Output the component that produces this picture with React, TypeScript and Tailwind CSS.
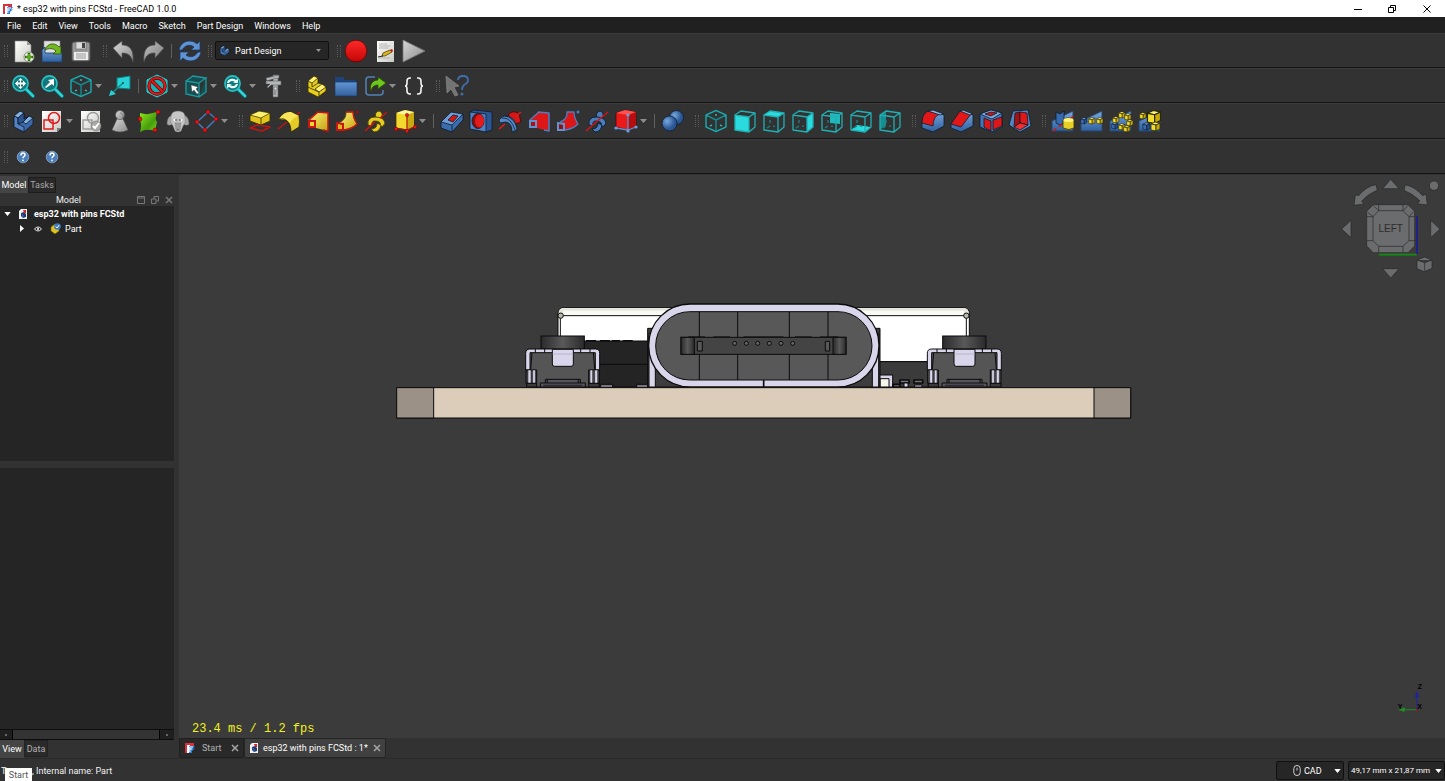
import React from 'react';

const CYAN = '#2fd3d6';
const TEAL = '#16898c';
const DARK = '#0c1a2b';
const OLIVE = '#332c00';

// Corners of the wire cube used by the standard views
const FACES: Record<string, string> = {
  front: '2,6 16,8 16,23 2,21',
  top: '2,6 16,8 22,4 8,2',
  right: '16,8 22,4 22,18 16,23',
  rear: '8,2 22,4 22,18 8,16',
  bottom: '2,21 16,23 22,18 8,16',
  left: '2,6 8,2 8,16 2,21',
};

const IsoWire = () => (
  <g fill="none" stroke={TEAL} strokeWidth="1.4" strokeLinejoin="round">
    <path d="M12 1.5 22 6v12l-10 4.5L2 18V6zM2 6l10 5 10-5M12 11v11.5" />
    <path d="M12 1.5 22 6v12l-10 4.5L2 18V6z" stroke={CYAN} strokeWidth="0.5" />
    <path d="M12 5v2M6 17l2-1M18 17l-2-1" stroke={CYAN} strokeWidth="1.2" />
  </g>
);

const ViewCube = ({ face }: { face: string }) => (
  <g strokeLinejoin="round">
    {face === 'rear' && <polygon points="10,4 20,5 20,15 10,14" fill="#1fb9bd" />}
    {face !== 'rear' && <polygon points={FACES[face]} fill={face === 'left' ? '#168f92' : '#2bdadd'} />}
    <path d="M2 6l14 2v15L2 21zM2 6l6-4 14 2-6 4M22 4v14l-6 5" fill="none" stroke="#20b0b4" strokeWidth="1.3" />
    {face !== 'front' && <path d="M8 11v3M8 17l-3 2M11 17l2 .3" fill="none" stroke={TEAL} strokeWidth="1.2" />}
  </g>
);

const Lens = () => (
  <g>
    <path d="M15 15l7 7" stroke="#0a5b5e" strokeWidth="4.4" strokeLinecap="round" />
    <path d="M15 15l7 7" stroke={CYAN} strokeWidth="2.6" strokeLinecap="round" />
    <circle cx="9.5" cy="9.5" r="7.6" fill="#12777a" stroke="#27c3c6" strokeWidth="1.6" />
  </g>
);

const Block = ({ x = 0, y = 0, s = 1, c = 'y' }: { x?: number; y?: number; s?: number; c?: string }) => (
  <g transform={`translate(${x} ${y}) scale(${s})`} stroke={c === 'y' ? '#2b2600' : DARK} strokeLinejoin="round" strokeWidth=".8">
    <path d="M1 3l4-2 5 1-4 2z" fill={c === 'y' ? '#fff27a' : '#7fa9dd'} />
    <path d="M1 3l5 1v6L1 9z" fill={c === 'y' ? '#f2dc2c' : '#3d6db0'} />
    <path d="M6 4l4-2v6l-4 2z" fill={c === 'y' ? '#c4a80c' : '#28508c'} />
  </g>
);

const Stair = () => (
  <path d="M1 12 22 2v20H1z" fill="url(#blue)" stroke="#24466f" />
);

const BodyShape = () => (
  <g stroke={DARK} strokeWidth=".8" strokeLinejoin="round">
    <path d="M3 7l6-5 4 2v6l5-3 4 2v6l-9 8-10-5z" fill="#3a6aa9" />
    <path d="M3 7l6-5 4 2-6 5zM12 13l6-6 4 2-7 6z" fill="#85aedd" />
    <path d="M3 7l4 2v6l6 3v5l-10-5z" fill="#5282c0" />
    <path d="M7 9l6-5v6l5-3-6 6-5 2z" fill="#2c5590" />
  </g>
);

const Spiral = ({ fill, edge }: { fill: string; edge: string }) => (
  <g fill={fill} stroke={edge} strokeWidth=".9" strokeLinejoin="round">
    <path d="M12 9q-2-6 3-7 4 1 3 6l-2 3z" />
    <path d="M4 16q-1-8 7-8 9 0 10 6-1 4-5 4 2-6-5-6-4 0-3 5z" />
    <path d="M7 20q6 0 6-6l4 2q-1 7-7 7z" />
  </g>
);

const icons: Record<string, React.ReactNode> = {
  newDoc: (
    <g>
      <path d="M4 2h12l4 4v17H4z" fill="url(#paper)" stroke="#8a8a8a" strokeWidth=".6" />
      <path d="M16 2l4 4h-4z" fill="#999" />
      <circle cx="18" cy="18" r="5" fill="#f3f6ee" stroke="#7d8b70" />
      <path d="M18 14v8M14 18h8" stroke="#2f6b0a" strokeWidth="2.6" />
      <path d="M18 15v6M15 18h6" stroke="#6fc01e" strokeWidth="1.2" />
    </g>
  ),
  open: (
    <g>
      <path d="M4 2h16v13H4z" fill="#dedede" stroke="#888" strokeWidth=".6" />
      <path d="M2 11l3-3v6h16l1-1v10H2z" fill="url(#blue)" stroke="#1d3a68" strokeWidth=".8" />
      <path d="M5 11c2-7 10-8 14-3l2-1v8h-8l3-3c-3-3-7-3-11-1z" fill="#71b81d" stroke="#28490a" strokeWidth=".8" />
    </g>
  ),
  save: (
    <g>
      <rect x="3" y="3" width="18" height="19" rx="2" fill="#989898" stroke="#4c4c4c" />
      <rect x="7" y="3" width="10" height="7" fill="#ddd" stroke="#666" strokeWidth=".6" />
      <rect x="13" y="4" width="3" height="5" fill="#444" />
      <rect x="5" y="13" width="14" height="8" fill="#eee" />
      <path d="M7 15h10M7 17h10M7 19h10" stroke="#999" />
    </g>
  ),
  undo: <path d="M1 9l9-7v4c8 0 12 5 11 17-2-7-5-9-11-9v5z" fill="url(#silver)" stroke="#555" strokeWidth=".7" />,
  redo: <path d="M23 9l-9-7v4C6 6 2 11 3 23c2-7 5-9 11-9v5z" fill="url(#silver)" stroke="#555" strokeWidth=".7" opacity=".85" />,
  refresh: (
    <g fill="#5f93d2" stroke="#1d3a68" strokeWidth=".8">
      <path d="M1 11C3 1 14 0 19 5l3-3v9h-9l3-3c-4-3-9-2-12 3z" />
      <path d="M23 13c-2 10-13 11-18 6l-3 3v-9h9l-3 3c4 3 9 2 12-3z" />
    </g>
  ),
  record: <circle cx="12" cy="12" r="10.8" fill="url(#redBall)" stroke="#5c0000" strokeWidth=".7" />,
  editMacro: (
    <g>
      <rect x="4" y="2" width="17" height="21" fill="url(#paper)" />
      <path d="M6 5h8M6 7h11M6 9h9M6 19h11" stroke="#a5a5a5" strokeWidth=".8" />
      <path d="M9 17l1-3 7-3 2 2-7 4z" fill="#e3b51c" stroke="#3a2c00" strokeWidth=".7" />
      <path d="M17 11l2-1 1 2-1 1z" fill="#c11" />
      <path d="M5 18l5-1" stroke="#222" />
    </g>
  ),
  play: <path d="M1 1v22l22-11z" fill="url(#silver)" stroke="#777" strokeWidth=".8" />,
  fitAll: (
    <g>
      <Lens />
      <path d="M9.5 4l2.500 2.500h-2v2h2v-2L15 9.500l-3 3v-2h-2v2h2L9.500 15 7 12.500h2v-2H7v2L4 9.500l3-3v2h2v-2H7z" fill="#fff" />
    </g>
  ),
  fitSel: (
    <g>
      <Lens />
      <path d="M14 5v7l-2-2-6 4-1-1 5-5-2-2z" fill="#fff" />
    </g>
  ),
  iso: <IsoWire />,
  align: (
    <g>
      <path d="M9 4l13-2v13L9 14z" fill="#28d2d5" stroke="#0c7d80" />
      <path d="M15 9L4 19" stroke={TEAL} strokeWidth="1.4" />
      <circle cx="15" cy="9" r="1" fill="#0a5052" />
      <path d="M1 22l2-6 5 4z" fill="#28d2d5" />
    </g>
  ),
  drawStyle: (
    <g>
      <path d="M12 1l10 5v12l-10 5-10-5V6z" fill="#16b4b8" stroke={CYAN} />
      <circle cx="12" cy="12" r="8" fill="none" stroke="#570000" strokeWidth="3.4" />
      <circle cx="12" cy="12" r="8" fill="none" stroke="#e01919" strokeWidth="2.2" />
      <path d="M6.5 6.5l11 11" stroke="#570000" strokeWidth="3.6" />
      <path d="M6.5 6.5l11 11" stroke="#e01919" strokeWidth="2.4" />
    </g>
  ),
  boxSel: (
    <g>
      <path d="M2 7l13 2v14L2 20zM2 7l7-5 13 2-7 5M22 4v14l-7 5" fill="#174d50" stroke="#1e9a9e" strokeWidth="1.3" />
      <path d="M7 11l7 2-2 2 3 4-2 1-3-4-2 2z" fill="#fff" stroke="#333" strokeWidth=".4" />
    </g>
  ),
  zoomSync: (
    <g>
      <Lens />
      <path d="M4 9c1-5 6-5 9-3l2-1v4h-5l2-1c-3-2-5-1-6 1zM15 10c-1 5-6 5-9 3l-2 1v-4h5l-2 1c3 2 5 1 6-1z" fill="#e9ffff" />
    </g>
  ),
  caliper: (
    <g fill="#b5b8ba" stroke="#585b5d" strokeWidth=".6">
      <path d="M11 1h5v22h-5z" />
      <path d="M4 4l13-3v3l-6 1-6 2zM4 7h15v4H9l-3 3-1-1 3-3H4z" />
      <path d="M12 13h3v3h-3z" fill="#ddd" />
      <path d="M12 18h2M12 20h2" stroke="#333" />
    </g>
  ),
  part: (
    <g stroke={OLIVE} strokeWidth=".8" strokeLinejoin="round">
      <path d="M3 7l6-5 4 2v5l4 1 4 3v4l-8 6-10-5z" fill="#e8ce1f" />
      <path d="M3 7l6-5 4 2-6 5zM10 15l7-5 4 3-7 5z" fill="#fff07a" />
      <path d="M7 9v4l6-4M3 13l4 2 7 3v4" fill="none" />
    </g>
  ),
  folder: (
    <g>
      <path d="M1 3h9v3h12v6H1z" fill="#1d427c" />
      <path d="M1 8h22v14H1z" fill="url(#folder)" stroke="#183969" strokeWidth=".7" />
    </g>
  ),
  link: (
    <g>
      <path d="M12 3H6Q3 3 3 6v12q0 3 3 3h11q3 0 3-3v-2" fill="none" stroke="#5282b8" strokeWidth="1.5" />
      <path d="M8 17c-2-7 2-11 7-11V3l8 6-8 6v-4c-4 0-6 2-7 6z" fill="#6ec71c" stroke="#254c08" strokeWidth=".8" />
    </g>
  ),
  vars: (
    <path d="M9 4H8q-3 0-3 3v2q0 3-2 3 2 0 2 3v2q0 3 3 3h1M15 4h1q3 0 3 3v2q0 3 2 3-2 0-2 3v2q0 3-3 3h-1" fill="none" stroke="#f4f4f4" strokeWidth="1.6" />
  ),
  whatsThis: (
    <g>
      <path d="M1 2l13 10-5 1 4 8-3 1-4-7-4 4z" fill="#737373" stroke="#999" strokeWidth=".5" />
      <path d="M13 6q0-4 5-4t5 4q0 3-4 5-2 2-2 5" fill="none" stroke="#3f6fab" strokeWidth="1.8" />
      <circle cx="17" cy="20" r="1.5" fill="#3f6fab" />
    </g>
  ),
  body: <BodyShape />,
  sketch: (
    <g>
      <path d="M2 2h19v17l-4 4H2z" fill="url(#paper)" />
      <path d="M21 19h-4v4z" fill="#777" />
      <rect x="4" y="11" width="9" height="9" fill="none" stroke="#df1b1b" strokeWidth="1.5" />
      <circle cx="14" cy="9" r="5.5" fill="none" stroke="#df1b1b" strokeWidth="1.5" />
    </g>
  ),
  validate: (
    <g>
      <rect x="2" y="2" width="19" height="21" fill="url(#paper)" />
      <rect x="4" y="11" width="9" height="9" fill="none" stroke="#999" strokeWidth="1.4" />
      <circle cx="14" cy="9" r="5.5" fill="none" stroke="#999" strokeWidth="1.4" />
      <circle cx="17" cy="17" r="5" fill="#a8a8a8" stroke="#777" strokeWidth=".6" />
      <path d="M14 17l2 2 4-5" fill="none" stroke="#fff" strokeWidth="2" />
    </g>
  ),
  pawn: (
    <g fill="url(#silver)" stroke="#555" strokeWidth=".6">
      <path d="M4 21l5-11h6l5 11q-8 4-16 0z" />
      <circle cx="12" cy="6" r="4.5" />
      <path d="M12 4q4 0 3 5" fill="none" />
    </g>
  ),
  binder: (
    <g>
      <path d="M3 4q9 3 18-2-4 8-1 11l-2 9q-8-3-15 1 2-7 0-12z" fill="url(#green)" />
      <g fill="#f01212" stroke="#6d0000" strokeWidth=".5">
        <circle cx="21" cy="3" r="2" />
        <circle cx="3" cy="10" r="2" />
        <circle cx="18" cy="21" r="2" />
      </g>
    </g>
  ),
  sheep: (
    <g stroke="#777" strokeWidth=".4">
      <path d="M1 15q0-8 6-9v8q-3 4-6 1zM23 15q0-8-6-9v8q3 4 6 1z" fill="#a6a6a6" />
      <path d="M5 8q0-6 7-6t7 6q1 6-2 9l-2 5q-3 2-6 0l-2-5q-3-3-2-9z" fill="#c6c6c6" />
      <path d="M9 14h6l-1 7q-2 2-4 0z" fill="#9b9b9b" />
      <circle cx="9" cy="11" r="2" fill="#fff" />
      <circle cx="15" cy="11" r="2" fill="#fff" />
      <circle cx="10" cy="11" r=".8" fill="#333" />
      <circle cx="14" cy="11" r=".8" fill="#333" />
      <path d="M11 20l1 1 1-1" stroke="#333" fill="none" />
    </g>
  ),
  datum: (
    <g>
      <path d="M13 3L21 10 10 21 2 13z" fill="none" stroke="#4479bd" strokeWidth="1.5" />
      <g fill="#f01212" stroke="#6d0000" strokeWidth=".5">
        <circle cx="13" cy="3" r="2" />
        <circle cx="21" cy="10" r="2" />
        <circle cx="10" cy="21" r="2" />
        <circle cx="2" cy="13" r="2" />
      </g>
    </g>
  ),
  pad: (
    <g strokeLinejoin="round">
      <path d="M2 19l7-3 13 2-8 4z" fill="none" stroke="#c51414" strokeWidth="1.5" />
      <path d="M2 6v6l11 4 9-4V4z" fill="#e2c61b" stroke={OLIVE} strokeWidth=".8" />
      <path d="M2 6l9-4 11 2-9 5z" fill="#fff26e" stroke={OLIVE} strokeWidth=".7" />
      <path d="M13 9v7" stroke={OLIVE} strokeWidth=".8" />
    </g>
  ),
  revolve: (
    <g strokeLinejoin="round">
      <path d="M1 20L23 3" stroke="#c51414" strokeWidth="1.5" />
      <path d="M2 10Q7 2 14 3l8 4q1 6 0 11l-8 5q0-8-4-11-3-2-5-1z" fill="#e4cb28" stroke={OLIVE} strokeWidth=".8" />
      <path d="M2 10Q7 2 14 3l8 4q-6 1-9 7-4-6-11-4z" fill="#f8e65a" />
      <path d="M2 10q10-3 12 13" fill="none" stroke={OLIVE} strokeWidth=".7" />
    </g>
  ),
  loft: (
    <g strokeLinejoin="round">
      <path d="M2 11L12 3l10 1v18l-12-3z" fill="url(#yellow)" />
      <path d="M11 3l11 1v18l-5-1M3 11l9-8" fill="none" stroke="#c91414" strokeWidth="1.5" />
      <path d="M2 11h8v8H2z" fill="#c91414" />
      <path d="M4 13h4v4H4z" fill="#f0d82e" />
    </g>
  ),
  pipe: (
    <g strokeLinejoin="round">
      <path d="M4 14q8-4 7-11h7q0 6 4 12-5 5-13 6z" fill="url(#yellow)" stroke="#5b4a00" strokeWidth=".7" />
      <path d="M11 3h7q0 6 4 12-5 5-13 6" fill="none" stroke="#c91414" strokeWidth="1.3" />
      <path d="M1 13l8 1v8H1z" fill="#c91414" />
      <path d="M3 15l4 1v4H3z" fill="#d8b31c" />
      <circle cx="22" cy="3" r="1.6" fill="#9c0d0d" />
    </g>
  ),
  helix: (
    <g>
      <Spiral fill="#e6cb22" edge="#4a3f00" />
      <path d="M1 22l10-9M16 9l7-6" stroke="#c91414" strokeWidth="1.5" />
    </g>
  ),
  addPrim: (
    <g>
      <path d="M3 4l9-3 9 2v15l-7 3-11-2z" fill="#f0d92c" stroke={OLIVE} strokeWidth=".7" />
      <path d="M14 6l7-3v15l-7 3z" fill="#c6ab12" />
      <path d="M3 4l9-3 9 2-7 3z" fill="#fff79a" />
      <path d="M14 6v15M3 19l11 2 7-3" stroke="#b51212" strokeWidth="1.2" fill="none" />
      <g fill="#e81616" stroke="#6d0000" strokeWidth=".4">
        <circle cx="14" cy="6" r="1.7" /><circle cx="3" cy="20" r="1.7" /><circle cx="14" cy="22" r="1.7" /><circle cx="22" cy="18" r="1.7" />
      </g>
    </g>
  ),
  pocket: (
    <g stroke={DARK} strokeWidth=".8" strokeLinejoin="round">
      <path d="M1 13v6l11 4L23 11V5z" fill="#3a6cae" />
      <path d="M1 13L11 3l12 2-11 11z" fill="#6d9bd6" />
      <path d="M8 11l5-5 5 1-5 6z" fill="#d61414" />
      <path d="M12 16v7" />
    </g>
  ),
  hole: (
    <g stroke={DARK} strokeWidth=".8" strokeLinejoin="round">
      <path d="M1 3l4-2 18 2v18l-6 2z" fill="#2c5794" />
      <path d="M1 3l16 2v18L1 20z" fill="#5083c4" />
      <ellipse cx="9" cy="12" rx="6" ry="7.5" fill="#8b0c0c" />
      <ellipse cx="10.5" cy="12" rx="4.5" ry="6.5" fill="#e31b1b" stroke="none" />
    </g>
  ),
  groove: (
    <g strokeLinejoin="round">
      <path d="M10 6q5-6 11-1l2 8-5 2z" fill="#d31818" stroke="#4d0000" strokeWidth=".8" />
      <path d="M1 11q6-8 14-1 4 4 4 11l-5 2q0-9-6-10l-6 1z" fill="#5487c6" stroke={DARK} strokeWidth=".8" />
      <path d="M4 9q9-1 13 12M7 7q8 1 12 11" fill="none" stroke={DARK} strokeWidth=".8" />
      <path d="M1 20l6-5M18 7l5-4" stroke="#e31b1b" strokeWidth="1.6" />
    </g>
  ),
  subLoft: (
    <g strokeLinejoin="round">
      <path d="M2 11l9-8 11 1v18l-12-3z" fill="#dd1717" />
      <path d="M11 3l11 1v18l-5-1M3 11l9-8" fill="none" stroke="#4a7fc2" strokeWidth="1.5" />
      <path d="M2 11h8v8H2z" fill="#6093d2" />
      <path d="M4 13h4v4H4z" fill="#aa1010" />
    </g>
  ),
  subPipe: (
    <g strokeLinejoin="round">
      <path d="M4 14q8-4 7-11h7q0 6 4 12-5 5-13 6z" fill="#dd1717" />
      <path d="M4 13q8-3 7-10h7q0 6 4 12-5 5-13 6" fill="none" stroke="#4a7fc2" strokeWidth="1.3" />
      <path d="M1 13l8 1v8H1z" fill="#6093d2" />
      <path d="M3 15l4 1v4H3z" fill="#8c1212" />
      <circle cx="22" cy="3" r="1.5" fill="#4a7fc2" />
    </g>
  ),
  subHelix: (
    <g>
      <Spiral fill="#4a7dbd" edge={DARK} />
      <path d="M1 22l10-9 12-10" stroke="#d31616" strokeWidth="1.5" />
    </g>
  ),
  subPrim: (
    <g>
      <path d="M2 4l9-3 11 2v15l-8 3-12-3z" fill="#e81a1a" stroke="#4d0000" strokeWidth=".7" />
      <path d="M14 6l8-3v15l-8 3z" fill="#b40e0e" />
      <path d="M2 4l9-3 11 2-8 3z" fill="#ff5050" />
      <path d="M14 6v15M2 19l12 2 8-3" stroke="#5d8fcd" strokeWidth="1.3" fill="none" />
      <g fill="#6da0df"><circle cx="14" cy="6" r="1.6" /><circle cx="2" cy="19" r="1.6" /><circle cx="14" cy="22" r="1.6" /><circle cx="22" cy="18" r="1.6" /></g>
    </g>
  ),
  boolean: (
    <g stroke={DARK} strokeWidth=".8">
      <circle cx="15.5" cy="8.5" r="7" fill="url(#blueBall)" />
      <circle cx="8.5" cy="14.5" r="7.5" fill="url(#blueBall)" />
    </g>
  ),
  fillet: (
    <g stroke={DARK} strokeWidth=".8" strokeLinejoin="round">
      <path d="M1 13v6l11 4 11-6V6L13 2z" fill="url(#blue)" />
      <path d="M1 14Q1 5 7 2l12 3q-7 2-7 12z" fill="#e21818" />
      <path d="M7 2l5-1 11 4-4 1z" fill="#8ab2e2" />
    </g>
  ),
  chamfer: (
    <g stroke={DARK} strokeWidth=".8" strokeLinejoin="round">
      <path d="M1 15v4l10 4 12-6V6L13 2z" fill="url(#blue)" />
      <path d="M1 15L10 2l11 3-10 13z" fill="#e21818" />
      <path d="M10 2l3-1 10 4-3 1z" fill="#8ab2e2" />
    </g>
  ),
  draft: (
    <g stroke={DARK} strokeWidth=".8" strokeLinejoin="round">
      <path d="M1 5l11-4 11 3v14l-10 5-12-5z" fill="#4376b7" />
      <path d="M5 9l7 3v10l-7-4zM14 11l9-3v9l-9 4z" fill="#dd1717" />
      <path d="M1 5l11-4 11 3-10 6z" fill="#7fabdf" />
      <path d="M6 5l6-2 6 1-6 3z" fill="#c81717" />
    </g>
  ),
  thickness: (
    <g stroke={DARK} strokeWidth=".8" strokeLinejoin="round">
      <path d="M1 16L5 2l15-1 3 16-11 6z" fill="#5586c4" />
      <path d="M7 4l5-1v11l-6 4z" fill="#a81010" />
      <path d="M12 3l7 1 1 12-8-2z" fill="#e21818" />
      <path d="M6 18l6-4 8 2-8 5z" fill="#f03030" />
    </g>
  ),
  mirror: (
    <g>
      <Stair />
      <path d="M5 3l4 2 4-3v12l-4 2-4-2z" fill="#376bb0" stroke={DARK} strokeWidth=".8" />
      <path d="M2 22L23 7" stroke="#d31616" strokeWidth="1.6" strokeDasharray="4 3" />
      <path d="M12 11q5-4 11 0v8q-5 3-11 0z" fill="#e8cf26" stroke={OLIVE} strokeWidth=".8" />
      <ellipse cx="17.5" cy="11" rx="5" ry="2" fill="#fff27a" />
    </g>
  ),
  linear: (
    <g><Stair /><Block x={0} y={8} s={0.7} c="b" /><Block x={8} y={8} s={0.7} /><Block x={16} y={8} s={0.7} /></g>
  ),
  polar: (
    <g>
      <Stair />
      <Block x={2} y={13} s={0.7} c="b" /><Block x={3} y={7} s={0.7} /><Block x={9} y={2} s={0.7} />
      <Block x={15} y={4} s={0.7} /><Block x={17} y={10} s={0.7} /><Block x={9} y={14} s={0.7} /><Block x={14} y={16} s={0.7} />
    </g>
  ),
  multi: (
    <g><Stair /><Block x={1} y={3} s={0.7} /><Block x={8} y={0} s={1.45} /><Block x={4} y={13} s={0.8} c="b" /><Block x={12} y={12} s={1} /></g>
  ),
  help: (
    <g>
      <circle cx="12" cy="12" r="5.8" fill="#4c7fbd" stroke="#a9c3e2" strokeWidth=".6" />
      <path d="M10 10.5q0-2.500 2-2.500t2 2q0 1-1.200 1.700-.8.5-.8 1.500" fill="none" stroke="#fff" strokeWidth="1.5" />
      <circle cx="12" cy="15.3" r=".9" fill="#fff" />
    </g>
  ),
};
Object.keys(FACES).forEach((f) => {
  icons[`view-${f}`] = <ViewCube face={f} />;
});

const Gradients = () => (
  <svg className="absolute size-0" aria-hidden="true">
    <defs>
      <linearGradient id="paper" x2="1" y2="1"><stop stopColor="#fff" /><stop offset="1" stopColor="#c9c9c4" /></linearGradient>
      <linearGradient id="silver" x2="1" y2="1"><stop stopColor="#d8d8d8" /><stop offset="1" stopColor="#8b8b8b" /></linearGradient>
      <linearGradient id="yellow" x2="1" y2="1"><stop stopColor="#fff27a" /><stop offset="1" stopColor="#c4a310" /></linearGradient>
      <linearGradient id="blue" x2="0" y2="1"><stop stopColor="#7aa7dc" /><stop offset="1" stopColor="#2f609f" /></linearGradient>
      <linearGradient id="folder" x2="0" y2="1"><stop stopColor="#6295d3" /><stop offset="1" stopColor="#34619d" /></linearGradient>
      <linearGradient id="green" x2="1" y2="1"><stop stopColor="#8af01a" /><stop offset=".6" stopColor="#489c0e" /><stop offset="1" stopColor="#76e012" /></linearGradient>
      <linearGradient id="redBall" x2="0" y2="1"><stop stopColor="#ff2a2a" /><stop offset="1" stopColor="#c40505" /></linearGradient>
      <radialGradient id="blueBall" cx=".35" cy=".35"><stop stopColor="#79a8dd" /><stop offset="1" stopColor="#2a5796" /></radialGradient>
      <linearGradient id="knob"><stop stopColor="#2a2a2a" /><stop offset=".5" stopColor="#595959" /><stop offset="1" stopColor="#2a2a2a" /></linearGradient>
    </defs>
  </svg>
);

const Icon = ({ name, className = 'size-6' }: { name: string; className?: string }) => (
  <svg viewBox="0 0 24 24" className={className} aria-hidden="true">{icons[name]}</svg>
);

const Handle = ({ narrow = false }: { narrow?: boolean }) => (
  <div className={narrow ? 'flex w-2 justify-end' : 'flex w-[14px] justify-end pr-0.5'}>
    <div className="h-3 w-1 border-x border-dotted border-[#5c5c5c]" />
  </div>
);

const Sep = () => (
  <div className="flex w-2 justify-center"><div className="h-[14px] w-px bg-[#606060]" /></div>
);

const Tool = ({ name, menu = false }: { name: string; menu?: boolean }) => (
  <div className="flex shrink-0 items-center">
    <button type="button" aria-label={name} className="flex w-[29px] items-center justify-center">
      <Icon name={name} />
    </button>
    {menu && (
      <button type="button" aria-label={`${name} options`} className="flex w-[10px] items-center">
        <svg viewBox="0 0 7 4" className="h-1 w-[7px]"><path d="M0 0h7L3.5 4z" fill="#8d8d8d" /></svg>
      </button>
    )}
  </div>
);

// '|' is a separator, '#' a grip, a trailing '+' adds a drop-down arrow
const ToolRow = ({ items }: { items: string[] }) => (
  <>
    {items.map((it, i) => {
      if (it === '|') return <Sep key={i} />;
      if (it === '#') return <Handle key={i} narrow={i === 0} />;
      return <Tool key={i} name={it.replace('+', '')} menu={it.endsWith('+')} />;
    })}
  </>
);

const rowClass = 'flex shrink-0 items-center border-t border-b border-t-[#3c3c3c] border-b-[#141414] bg-[#323232]';

const view = ['#', 'fitAll', 'fitSel', 'iso+', 'align', '|', 'drawStyle+', 'boxSel+', 'zoomSync+', 'caliper', '#', 'part', 'folder', 'link+', 'vars', '#', 'whatsThis'];
const design = [
  '#', 'body', 'sketch+', 'validate', 'pawn', 'binder', 'sheep', 'datum+',
  '#', 'pad', 'revolve', 'loft', 'pipe', 'helix', 'addPrim+', '|',
  'pocket', 'hole', 'groove', 'subLoft', 'subPipe', 'subHelix', 'subPrim+', '|', 'boolean',
  '#', 'iso', 'view-front', 'view-top', 'view-right', 'view-rear', 'view-bottom', 'view-left',
  '#', 'fillet', 'chamfer', 'draft', 'thickness', '#', 'mirror', 'linear', 'polar', 'multi',
];

const Logo = ({ className }: { className: string }) => (
  <svg viewBox="0 0 12 12" className={className} aria-hidden="true">
    <path d="M1 1h9v3H5v2h3v2H5v3H1z" fill="#d9303b" />
    <path d="M3 3h3v8H3z" fill="#fff" />
    <path d="M5 4h6L9 6.5h2L8 9v2H5z" fill="#2f7fd8" />
    <path d="M5.500 5H9M5.500 7H8M5.800 5v5" stroke="#fff" strokeWidth="1" />
  </svg>
);

const DocIcon = () => (
  <svg viewBox="0 0 10 12" className="h-3 w-[10px] shrink-0" aria-hidden="true">
    <path d="M1 3l2-2h6v10H1z" fill="#f1f1f1" />
    <path d="M3 5l3-1 2 2v3L5 10 3 8z" fill="#1d3b73" />
    <path d="M5 2h3v3H6z" fill="#cf2525" />
    <path d="M3.500 6l1.500 1v2" stroke="#3b70bd" fill="none" />
  </svg>
);

const Chevron = ({ className }: { className: string }) => (
  <svg viewBox="0 0 8 5" className={className} aria-hidden="true"><path d="M0 0h8L4 5z" fill="currentColor" /></svg>
);

const TitleBar = () => (
  <div className="flex h-[17px] shrink-0 items-center bg-white text-black">
    <Logo className="ml-[2px] size-3" />
    <span className="ml-[3px]">* esp32 with pins FCStd - FreeCAD 1.0.0</span>
    <div className="ml-auto flex">
      <button type="button" aria-label="Minimize" className="flex w-[34px] justify-center">
        <svg viewBox="0 0 8 8" className="size-2"><path d="M0 4.500h8" stroke="#000" /></svg>
      </button>
      <button type="button" aria-label="Restore" className="flex w-[34px] justify-center">
        <svg viewBox="0 0 8 8" className="size-2" fill="none" stroke="#000"><path d="M.5 2.500h5v5h-5zM2.500 2V.5h5v5H6" /></svg>
      </button>
      <button type="button" aria-label="Close" className="flex w-9 justify-center">
        <svg viewBox="0 0 8 8" className="size-2" stroke="#000"><path d="M.5.5l7 7M7.500.5l-7 7" /></svg>
      </button>
    </div>
  </div>
);

const MenuBar = () => (
  <nav className="flex h-4 shrink-0 items-center gap-[11px] bg-[#202020] px-[7px] pt-px text-white">
    {['File', 'Edit', 'View', 'Tools', 'Macro', 'Sketch', 'Part Design', 'Windows', 'Help'].map((m) => (
      <button key={m} type="button">{m}</button>
    ))}
  </nav>
);

const LeftPanel = () => (
  <aside className="flex w-[175px] shrink-0 flex-col bg-[#323232]">
    <div className="flex h-[18px] items-end">
      <button type="button" className="h-[17px] w-7 bg-[#454545] text-white">Model</button>
      <button type="button" className="h-4 w-7 rounded-t-xs border border-[#1c1c1c] bg-[#292929] text-[#a8a8a8]">Tasks</button>
    </div>
    <div className="flex h-[13px] items-center text-[#f0f0f0]">
      <span className="w-[137px] text-center">Model</span>
      <div className="flex items-center gap-[6px] text-[#777]">
        <svg viewBox="0 0 8 8" className="size-2" fill="none" stroke="currentColor"><path d="M.5.5h7v7h-7zM.5 2h7" /></svg>
        <svg viewBox="0 0 8 8" className="size-2" fill="none" stroke="currentColor"><path d="M.5 3h4.500v4.500H.5zM3 3V.5h4.500V5H5" /></svg>
        <svg viewBox="0 0 8 8" className="size-2" fill="none" stroke="currentColor" strokeWidth="1.5"><path d="M1 1l6 6M7 1L1 7" /></svg>
      </div>
    </div>
    <div className="min-h-0 w-[174px] flex-[255] bg-[#252525] text-white">
      <div className="flex h-[15px] items-center">
        <Chevron className="ml-1 h-1 w-[7px]" />
        <div className="ml-[7px] flex"><DocIcon /></div>
        <span className="ml-[6px] font-bold">esp32 with pins FCStd</span>
      </div>
      <div className="flex h-[15px] items-center">
        <svg viewBox="0 0 4 7" className="ml-5 h-[7px] w-1"><path d="M0 0v7l4-3.500z" fill="#fff" /></svg>
        <svg viewBox="0 0 8 6" className="ml-[10px] h-[6px] w-2"><path d="M.5 3q3.500-4 7 0-3.500 4-7 0z" fill="none" stroke="#fff" strokeWidth=".9" /><circle cx="4" cy="3" r="1" fill="#fff" /></svg>
        <svg viewBox="0 0 11 11" className="ml-2 size-[11px]">
          <path d="M1 4l4-3 4 2v5l-4 3-4-3z" fill="#dcc21f" stroke="#6b5c00" strokeWidth=".5" />
          <circle cx="7.5" cy="3.5" r="3.3" fill="#3c76c4" />
          <path d="M5.800 3.500l1.400 1.500 2-3" fill="none" stroke="#fff" />
        </svg>
        <span className="ml-1">Part</span>
      </div>
    </div>
    <div className="h-[7px]" />
    <div className="flex min-h-0 w-[174px] flex-[272] flex-col justify-end bg-[#252525]">
      <div className="flex h-[11px] items-center border-y border-[#0e0e0e] bg-[#1f1f1f]">
        <button type="button" aria-label="Scroll left" className="flex w-3 justify-center"><i className="size-0.5 bg-[#666]" /></button>
        <div className="h-full flex-1 border-x border-black bg-[#333]" />
        <button type="button" aria-label="Scroll right" className="flex w-[14px] justify-center"><i className="size-0.5 bg-[#666]" /></button>
      </div>
    </div>
    <div className="flex h-[18px] items-start">
      <button type="button" className="h-[18px] w-6 bg-[#454545] text-white">View</button>
      <button type="button" className="h-[17px] w-6 rounded-b-xs border border-[#222] bg-[#2a2a2a] text-[#b0b0b0]">Data</button>
    </div>
  </aside>
);

const PushButton = ({ x = 0 }: { x?: number }) => (
  <g transform={`translate(${x} 0)`} stroke="#0b0b0b" strokeWidth="3">
    <rect x="93" y="138" width="130" height="40" fill="url(#knob)" />
    <path d="M47 240V190q0-13 13-13h196q13 0 13 13v50z" fill="#d9d5ea" />
    <path d="M60 291V188h196v103z" fill="#555" />
    <path d="M76 177v11M104 177v11M212 177v11M240 177v11M66 188l-4 50M250 188l4 50" />
    <path d="M127 178h63v44q0 7-7 7h-49q-7 0-7-7z" fill="#d9d5ea" />
    <path d="M127 192h63" stroke="#aaa6bc" strokeWidth="2" />
    <path d="M48 240h32v40H48zM236 240h32v40h-32z" fill="#4b4b50" />
    <path d="M54 240h9v40h-9zM68 240h8v40h-8zM240 240h8v40h-8zM254 240h9v40h-9z" fill="#d9d5ea" strokeWidth="1.5" />
    <path d="M50 280h30v11H50zM236 280h32v11h-32z" fill="#3a3a3a" />
    <path d="M91 291v-12h15v-11h105v11h15v12zM106 279h105M112 268v11M205 268v11" fill="#55545f" />
    <path d="M100 287h117" stroke="#2c2b33" strokeWidth="5" />
  </g>
);

const Model = () => (
  <svg viewBox="-345 30 2214 360" className="absolute top-[125px] left-[216px] h-[120px] w-[738px]" role="img" aria-label="esp32 model" stroke="#0b0b0b" strokeWidth="3">
    <path d="M144 152V72q0-19 19-19h1196q19 0 19 19v143H144z" fill="#fff" />
    <path d="M146 76V70q0-16 16-16h1198q16 0 16 16v6z" fill="#e6e6de" stroke="none" />
    <path d="M160 62h1202v13H160z" fill="#fbfbf6" stroke="none" />
    <path d="M150 77h1220M151 77v75M1369 77v75" />
    <circle cx="152" cy="77" r="8" fill="#b8b8ac" />
    <circle cx="1369" cy="77" r="8" fill="#b8b8ac" />
    <path d="M222 153h195v138H222z" fill="#242424" />
    <path d="M222 223h195" />
    <path d="M228 152h30M270 152h30M305 152h25M338 152h30" strokeWidth="4" />
    <path d="M1100 215h155v76h-155z" fill="#3b3b3b" />
    <path d="M272 291v-8h36v8M380 291v-8h34v8" fill="#77757f" />
    <path d="M1108 291v-36h40v36z" fill="#d9d5ea" />
    <path d="M1110 291v-25h27v25z" fill="#f5f5ea" />
    <path d="M1150 283h20v8h-20zM1170 270h27v9h-27zM1212 270h26v9h-26z" fill="#77757f" strokeWidth="5" />
    <path d="M1182 279h12v12h-12zM1214 285h22v6h-22z" fill="#d9d5ea" />
    <path d="M413 115h697v176H413z" fill="#3d3d3d" />
    <path d="M417 130h19v161h-19zM1087 130h19v161h-19z" fill="#d9d5ea" />
    <rect x="416" y="42" width="691" height="249" rx="124" fill="#d9d5ea" strokeWidth="4" />
    <rect x="437" y="65" width="649" height="205" rx="102" fill="#585858" />
    <path d="M568 66v204M683 66v204M838 66v204M954 66v204" />
    <path d="M535 140h50M610 140h50M700 140h120M855 140h50M930 140h55" strokeWidth="2" />
    <rect x="513" y="142" width="495" height="51" fill="#444" />
    <rect x="513" y="142" width="40" height="51" fill="url(#knob)" />
    <rect x="969" y="142" width="39" height="51" fill="url(#knob)" />
    <path d="M562 154h15v29h-15zM946 154h13v29h-13z" fill="#585858" />
    {[674, 709, 743, 778, 813, 848].map((cx) => (
      <circle key={cx} cx={cx} cy="160" r="6" fill="#666" />
    ))}
    <path d="M761 270v21" strokeWidth="5" />
    <PushButton />
    <PushButton x={1205} />
    <path d="M-340 293h2202v91H-340z" fill="#dccdbb" />
    <path d="M-340 293h111v91h-111zM1752 293h110v91h-110z" fill="#9c9186" />
  </svg>
);

const NavCube = () => (
  <svg viewBox="0 0 345 345" className="absolute top-0 right-0 size-[115px]" fill="#6b6c6e" stroke="#252525" strokeWidth="2">
    <g transform="translate(0 -15)">
      <path d="M182 28l25 28h-49zM182 324l25-28h-49zM35 177l28-26v52zM330 177l-28-26v52z" />
      <path d="M138 44q-30 5-52 33l-10-3-4 32 30-4-7-8q17-21 47-33zM226 44q30 7 52 33l10-5 4 33-31-4 9-8q-18-19-48-32z" />
      <circle cx="312" cy="47" r="14" />
      <path d="M130 104h104l20 20v104l-20 20H130l-20-20V124z" />
      <path d="M146 122h73l18 18v72l-18 17h-73l-17-17v-72zM146 104v18M219 104v18M146 229v19M219 229v19M110 140h19M110 212h19M237 140h17M237 212h17M113 127l17 13M130 107l16 15M234 107l-15 15M252 124l-15 16" />
      <text x="182" y="187" textAnchor="middle" fontSize="30" fontFamily="Liberation Sans, sans-serif" fill="#2b2b2b" stroke="none">LEFT</text>
      <path d="M146 254h114" stroke="#128f12" strokeWidth="5" />
      <path d="M261 139v113" stroke="#1c1c9c" strokeWidth="5" />
      <path d="M261 270l23-9 22 9v25l-23 10-22-9zM261 270l23 8 22-8M284 278v26" />
    </g>
  </svg>
);

const Axes = () => (
  <svg viewBox="0 0 90 90" className="absolute right-[19px] bottom-6 size-[30px]" fontFamily="Liberation Sans, sans-serif" fontSize="21" fontWeight="bold">
    <path d="M63 77V36" stroke="#2222a0" strokeWidth="3" />
    <path d="M63 20l7 20H56z" fill="#2222a0" />
    <path d="M63 77H24" stroke="#1d8f1d" strokeWidth="3" />
    <path d="M6 77l20-7v14z" fill="#1d8f1d" />
    <path d="M60 78h6" stroke="#a11" strokeWidth="4" />
    <text x="65" y="16">Z</text>
    <text x="5" y="74">Y</text>
    <text x="64" y="74">X</text>
  </svg>
);

const CloseX = () => (
  <svg viewBox="0 0 8 8" className="size-2"><path d="M1 1l6 6M7 1L1 7" stroke="#a6a6a6" strokeWidth="1.5" /></svg>
);

const selectClass = 'h-[19px] appearance-none rounded-xs border border-[#101010] bg-[#262626] text-white';

export default function App() {
  return (
    <div className="flex h-screen flex-col overflow-hidden bg-[#323232] font-['Roboto',sans-serif] text-[9px] leading-3 whitespace-nowrap select-none">
      <Gradients />
      <TitleBar />
      <MenuBar />
      <div className={`${rowClass} h-[35px]`}>
        <ToolRow items={['#', 'newDoc', 'open', 'save']} />
        <Handle />
        <Tool name="undo" />
        <Tool name="redo" />
        <Sep />
        <Tool name="refresh" />
        <Handle narrow />
        <div className="relative ml-[3px]">
          <select aria-label="Workbench" className={`${selectClass} w-[114px] pl-[19px] text-[9px]`}>
            <option>Part Design</option>
          </select>
          <Icon name="body" className="pointer-events-none absolute top-1 left-1 size-[11px]" />
          <Chevron className="pointer-events-none absolute top-2 right-2 h-[3px] w-[5px] text-[#999]" />
        </div>
        <div className="flex items-center pl-1">
          <ToolRow items={['#', 'record', 'editMacro', 'play']} />
        </div>
      </div>
      <div className={`${rowClass} h-[35px]`}><ToolRow items={view} /></div>
      <div className={`${rowClass} h-9`}><ToolRow items={design} /></div>
      <div className={`${rowClass} h-[35px]`}><ToolRow items={['#', 'help', 'help']} /></div>

      <div className="flex min-h-0 flex-1 gap-1 pt-px">
        <LeftPanel />
        <main className="flex min-w-0 flex-1 flex-col">
          <div className="relative min-h-0 flex-1 overflow-hidden bg-[#3b3b3b]">
            <Model />
            <NavCube />
            <Axes />
            <p className="absolute bottom-[3px] left-[13px] font-['Liberation_Mono',monospace] text-[12px] text-[#f2f21c]">23.4 ms / 1.2 fps</p>
          </div>
          <div className="flex h-5 shrink-0">
            <div className="flex w-[65px] items-center rounded-b-xs border border-[#202020] bg-[#292929] px-1 text-[#b4b4b4]">
              <Logo className="size-3" />
              <button type="button" className="ml-[6px]">Start</button>
              <button type="button" aria-label="Close Start" className="ml-auto"><CloseX /></button>
            </div>
            <div className="flex w-[142px] items-center rounded-b-xs border border-[#252525] bg-[#404040] px-1 text-white">
              <DocIcon />
              <button type="button" className="ml-1">esp32 with pins FCStd : 1*</button>
              <button type="button" aria-label="Close document" className="ml-auto"><CloseX /></button>
            </div>
          </div>
        </main>
      </div>

      <footer className="relative flex h-[23px] shrink-0 items-center border-t border-[#2b2b2b] pt-px text-[#f2f2f2]">
        <span className="w-8 pl-px">T</span>
        <span>, Internal name: Part</span>
        <div role="tooltip" className="absolute top-[9px] left-[5px] h-[14px] w-[27px] bg-white text-center leading-[14px] text-[#555]">Start</div>
        <div className="relative ml-auto">
          <select aria-label="Navigation style" className={`${selectClass} w-[68px] pl-[27px] text-[9px]`}>
            <option>CAD</option>
          </select>
          <svg viewBox="0 0 8 12" className="pointer-events-none absolute top-1 left-[17px] h-[11px] w-2" fill="none" stroke="#ddd"><rect x=".5" y=".5" width="7" height="11" rx="3.5" /><path d="M4 3v3" /></svg>
          <Chevron className="pointer-events-none absolute top-2 right-[3px] h-1 w-[7px] text-white" />
        </div>
        <div className="relative ml-1">
          <select aria-label="View dimensions" className={`${selectClass} w-[97px] pl-[2px] text-[8px]`}>
            <option>49,17 mm x 21,87 mm</option>
          </select>
          <Chevron className="pointer-events-none absolute top-2 right-[3px] h-1 w-[7px] text-white" />
        </div>
      </footer>
    </div>
  );
}
